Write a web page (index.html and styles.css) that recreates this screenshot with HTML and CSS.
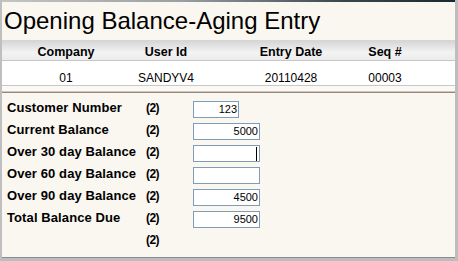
FILE: index.html
```html
<!DOCTYPE html>
<html>
<head>
<meta charset="utf-8">
<link rel="stylesheet" href="styles.css">
</head>
<body>
<div class="window">
  <div class="topbar"></div>
  <div class="panel">
    <h1 class="title">Opening Balance-Aging Entry</h1>
    <div class="keys-head keys">
      <div>Company</div><div>User Id</div><div>Entry Date</div><div>Seq #</div>
    </div>
    <div class="keys-vals keys">
      <div>01</div><div>SANDYV4</div><div>20110428</div><div>00003</div>
    </div>
    <div class="sep"></div>
    <div class="form">
      <div class="lbl">Customer Number</div><div class="tag">(2)</div><div><div class="field short">123</div></div>
      <div class="lbl">Current Balance</div><div class="tag">(2)</div><div><div class="field">5000</div></div>
      <div class="lbl">Over 30 day Balance</div><div class="tag">(2)</div><div><div class="field"><span class="caret"></span></div></div>
      <div class="lbl">Over 60 day Balance</div><div class="tag">(2)</div><div><div class="field"></div></div>
      <div class="lbl">Over 90 day Balance</div><div class="tag">(2)</div><div><div class="field">4500</div></div>
      <div class="lbl">Total Balance Due</div><div class="tag">(2)</div><div><div class="field">9500</div></div>
      <div class="lbl"></div><div class="tag">(2)</div><div></div>
    </div>
    <div class="fill"></div>
  </div>
</div>
</body>
</html>
```
FILE: styles.css
```css
html, body {
  margin: 0;
  padding: 0;
  background: #ffffff;
}
body {
  font-family: "Liberation Sans", Arial, sans-serif;
  color: #000;
}
.window {
  width: 458px;
  height: 261px;
  box-sizing: border-box;
  border-left: 2px solid #bfbfbf;
  border-right: 3px solid #bdbdbd;
  border-bottom: 3px solid #bdbdbd;
  display: flex;
  flex-direction: column;
  background: #faf6f0;
}
.topbar {
  height: 2px;
  background: linear-gradient(to right, #c4c4c4 0%, #9a9ea4 40%, #3a4650 75%, #1b2731 100%);
  flex: none;
}
.panel {
  flex: 1;
  display: flex;
  flex-direction: column;
  border-bottom: 1px solid #8a8a8a;
  background: #faf6f0;
}
.title {
  margin: 0;
  padding: 7px 0 7px 2px;
  font-size: 24px;
  line-height: 24px;
  font-weight: normal;
  white-space: nowrap;
}
.keys {
  display: grid;
  grid-template-columns: 100px 100px 150px 38px;
  padding-left: 14px;
  text-align: center;
  white-space: nowrap;
}
.keys-head {
  border-top: 1px solid #d6d6d6;
  border-bottom: 1px solid #c6c6c6;
  background: linear-gradient(#d6d6d6 0%, #f3f3f3 60%, #ececec 100%);
  box-sizing: border-box;
  height: 21px;
  padding-top: 3px;
  font-size: 12.5px;
  font-weight: bold;
  line-height: 16px;
}
.keys-vals {
  background: #ffffff;
  height: 25px;
  box-sizing: border-box;
  padding-top: 10px;
  border-bottom: 1px solid #c8c8c8;
  font-size: 12px;
  line-height: 14px;
}
.sep {
  height: 5px;
  background: #fbf9f6;
  border-bottom: 1px solid #d9c4b4;
}
.form {
  border-top: 1px solid #8e8984;
  padding: 6px 0 0 5px;
  display: grid;
  grid-template-columns: 139px 47px 80px;
  grid-auto-rows: 22px;
  align-items: start;
}
.lbl {
  font-size: 13px;
  font-weight: bold;
  line-height: 18px;
  letter-spacing: 0.1px;
  white-space: nowrap;
}
.tag {
  font-size: 12px;
  font-weight: bold;
  line-height: 18px;
  letter-spacing: -0.6px;
}
.field {
  margin-top: 2px;
  width: 67px;
  height: 17px;
  box-sizing: border-box;
  border: 1px solid #7f9db9;
  background: #ffffff;
  font-size: 11px;
  line-height: 15px;
  padding-right: 1px;
  display: flex;
  justify-content: flex-end;
  align-items: center;
}
.field.short {
  width: 46px;
}
.caret {
  display: block;
  width: 1px;
  height: 14px;
  background: #000;
  margin-right: 1px;
}
.fill {
  flex: 1;
}
```
